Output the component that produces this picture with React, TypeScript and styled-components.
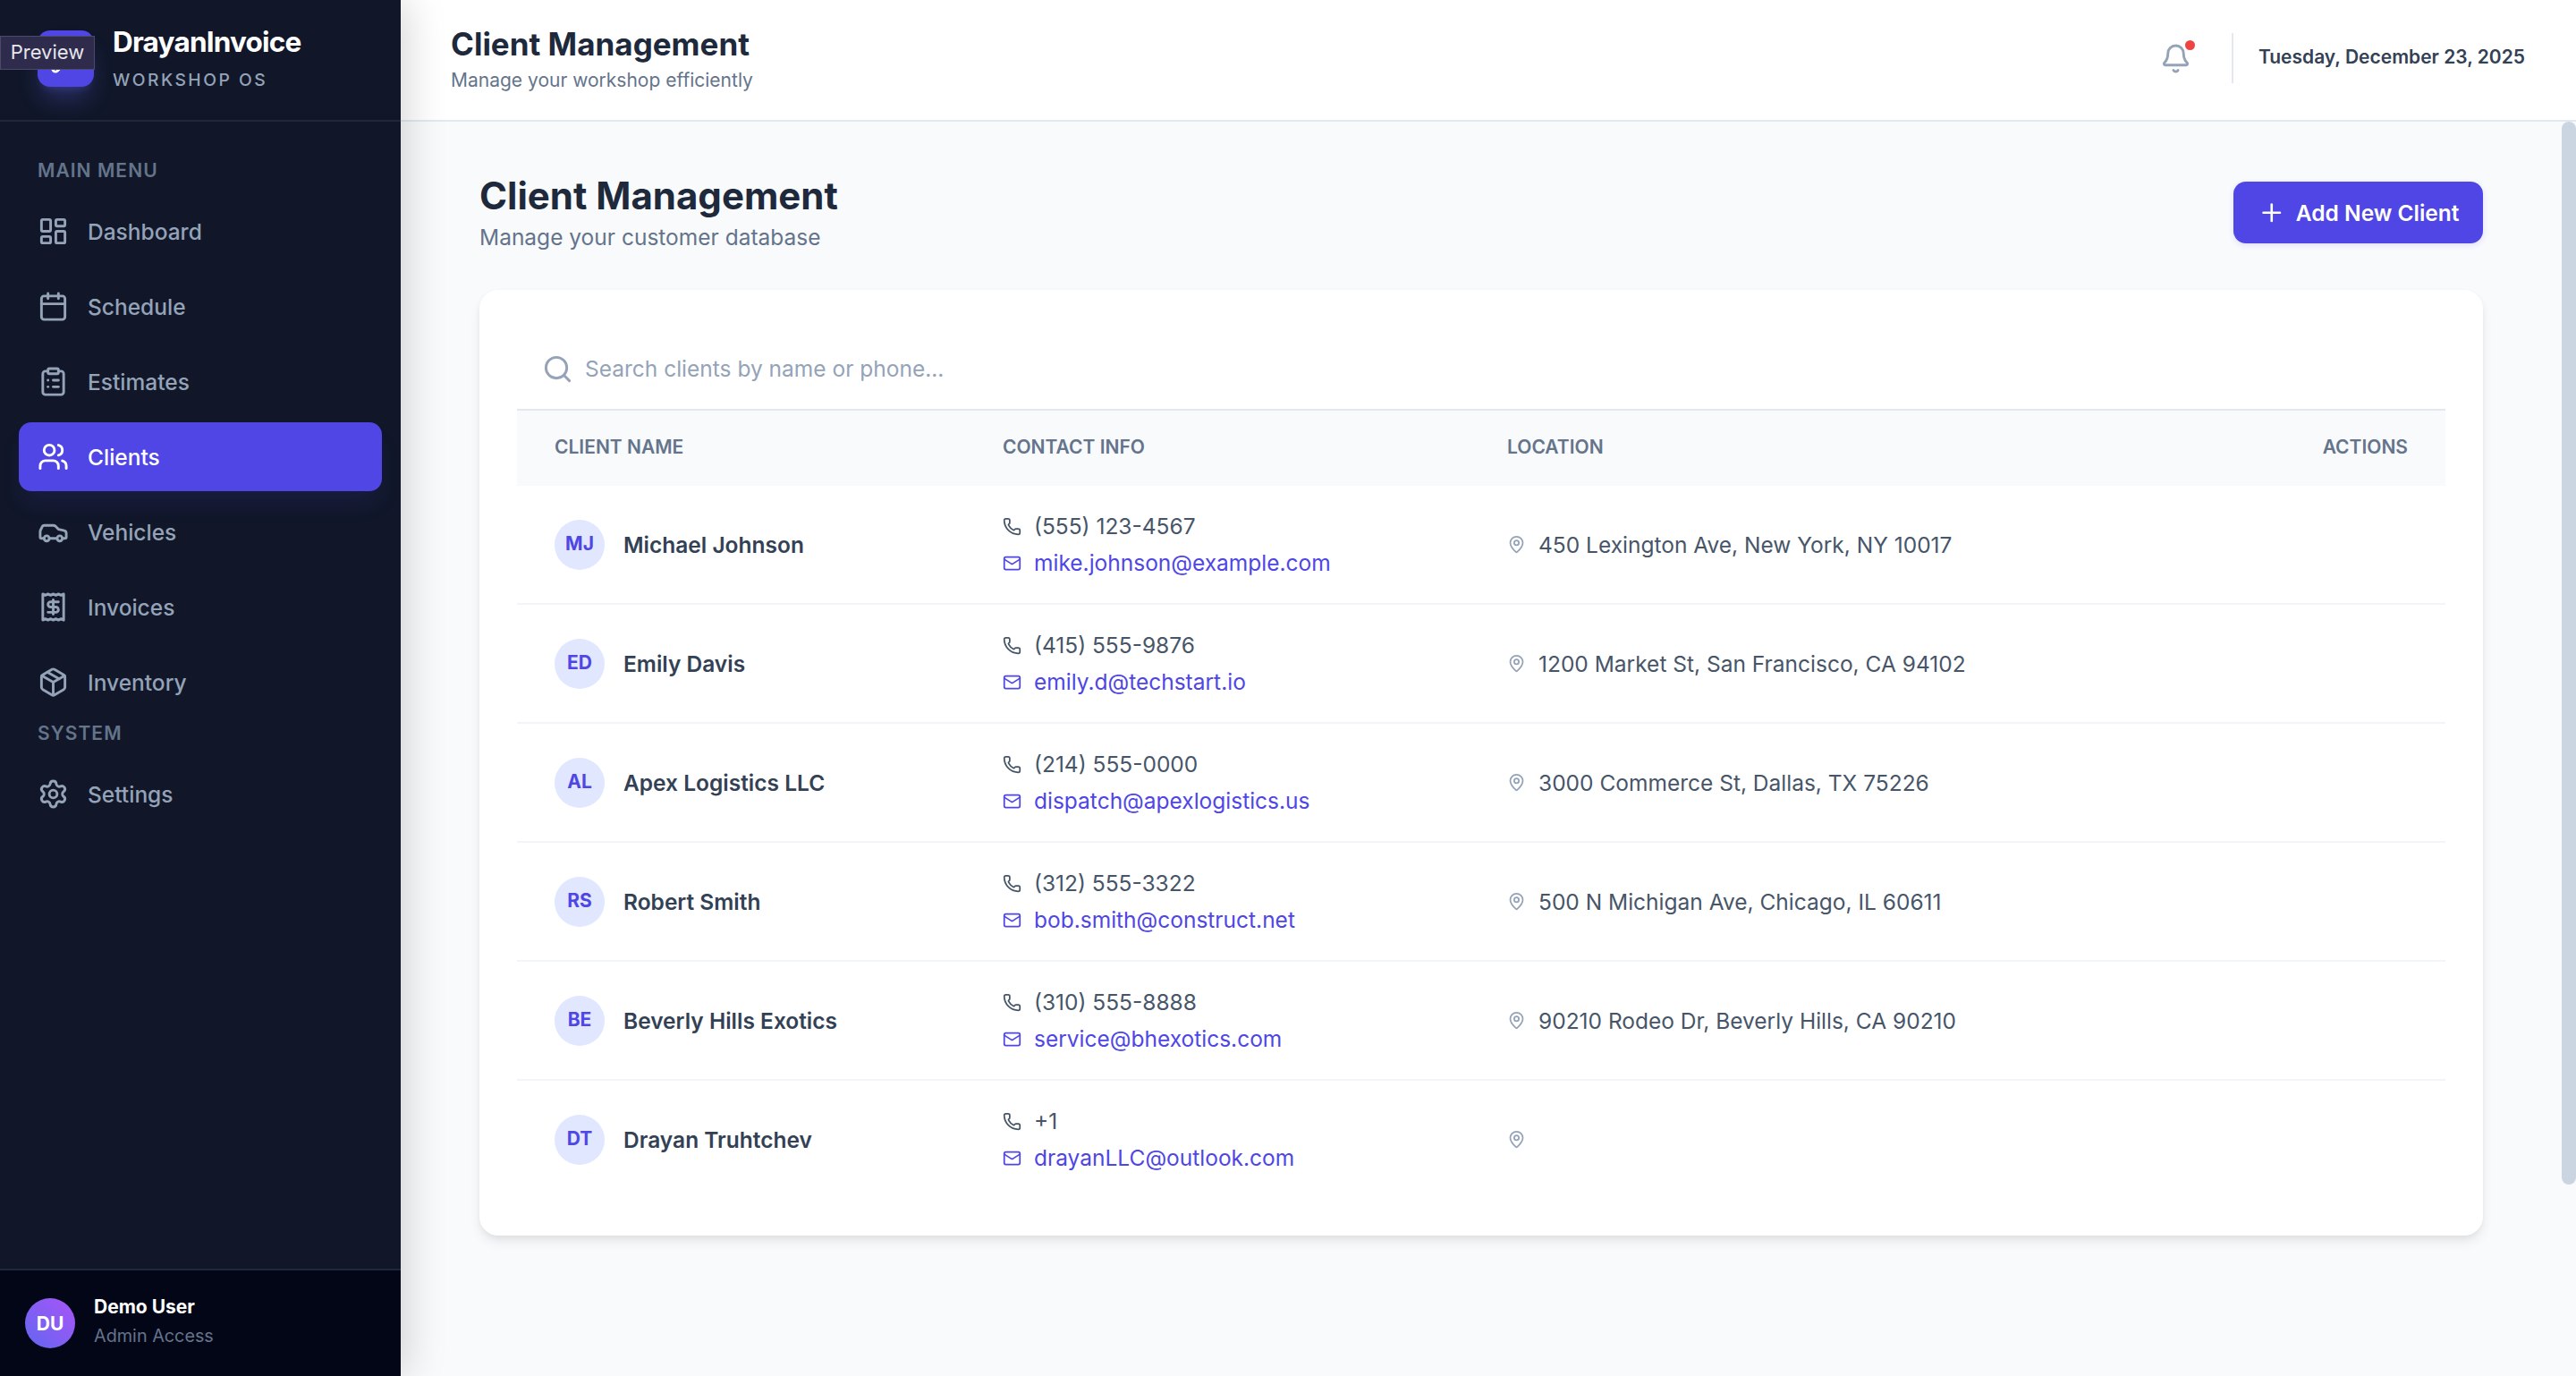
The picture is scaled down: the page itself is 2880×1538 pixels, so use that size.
import React from 'react';
import styled, { createGlobalStyle } from 'styled-components';
import {
  LayoutDashboard, Calendar, ClipboardList, Users, Car, Receipt, Package, Settings,
  Bell, Plus, Search, Phone, Mail, MapPin, Wrench,
} from 'lucide-react';

const Global = createGlobalStyle`
  html, body, #root { margin: 0; padding: 0; height: 100%; }
  body { font-family: Inter, "Liberation Sans", sans-serif; overflow: hidden; background: #f8fafc; -webkit-font-smoothing: antialiased; }
  * { box-sizing: border-box; }
`;

const Shell = styled.div`
  display: flex;
  height: 1538px;
  width: 2880px;
  overflow: hidden;
`;

const Sidebar = styled.aside`
  position: relative;
  z-index: 2;
  flex: 0 0 448px;
  display: flex;
  flex-direction: column;
  background: #111729;
  box-shadow: 4px 0 44px rgba(0, 0, 0, 0.18);
`;

const Brand = styled.div`
  position: relative;
  height: 136px;
  flex: none;
  display: flex;
  align-items: center;
  gap: 21px;
  padding: 0 42px 6px;
  border-bottom: 2px solid #1f2937;
`;

const LogoMark = styled.div`
  width: 63px;
  height: 63px;
  margin-top: 3px;
  border-radius: 14px;
  display: flex;
  align-items: center;
  justify-content: center;
  background: #4f46e5;
  color: #fff;
  box-shadow: 0 17.5px 26px -5px rgba(99, 102, 241, 0.3), 0 7px 10px -6px rgba(99, 102, 241, 0.3);
`;

const BrandText = styled.div`
  display: flex;
  flex-direction: column;
  gap: 11px;
`;

const BrandName = styled.div`
  font-size: 31.5px;
  line-height: 38px;
  font-weight: 700;
  letter-spacing: -0.79px;
  color: #fff;
`;

const BrandTag = styled.div`
  font-size: 19.25px;
  line-height: 24px;
  font-weight: 500;
  letter-spacing: 2.5px;
  color: #94a3b8;
`;

const PreviewBadge = styled.div`
  position: absolute;
  left: 0;
  top: 40px;
  width: 106px;
  height: 38px;
  padding-bottom: 2px;
  display: flex;
  align-items: center;
  justify-content: center;
  background: #2e2b4d;
  border: 1px solid #4b4a68;
  font-size: 22px;
  font-weight: 400;
  color: #e5e7eb;
`;

const Nav = styled.nav`
  flex: 1;
  display: flex;
  flex-direction: column;
  gap: 7px;
  padding: 43px 21px 0;
`;

const SectionLabel = styled.div`
  padding-left: 21px;
  font-size: 21px;
  line-height: 24px;
  font-weight: 600;
  letter-spacing: 1.05px;
  color: #64748b;
  margin-bottom: 10px;
`;

const NavItem = styled.div<{ $active?: boolean }>`
  flex: none;
  height: 77px;
  padding-left: 21px;
  display: flex;
  align-items: center;
  gap: 21px;
  border-radius: 14px;
  font-size: 24.5px;
  font-weight: 500;
  color: ${(p) => (p.$active ? '#fff' : '#94a3b8')};
  background: ${(p) => (p.$active ? '#4f46e5' : 'transparent')};
  box-shadow: ${(p) => (p.$active ? '0 17.5px 26px -5px rgba(79, 70, 229, 0.12)' : 'none')};
`;

const Footer = styled.div`
  height: 120px;
  flex: none;
  display: flex;
  align-items: center;
  gap: 21px;
  padding: 0 28px;
  background: #020617;
  border-top: 2px solid #1e293b;
`;

const UserAvatar = styled.div`
  width: 56px;
  height: 56px;
  border-radius: 50%;
  display: flex;
  align-items: center;
  justify-content: center;
  background: linear-gradient(45deg, #6366f1, #a855f7);
  color: #fff;
  font-size: 21px;
  font-weight: 700;
`;

const UserText = styled.div`
  display: flex;
  flex-direction: column;
  gap: 6px;
  padding-bottom: 5px;
`;

const UserName = styled.div`
  font-size: 21px;
  line-height: 26px;
  font-weight: 700;
  color: #fff;
`;

const UserRole = styled.div`
  font-size: 19.8px;
  line-height: 26px;
  color: #64748b;
`;

const Main = styled.div`
  flex: 1;
  min-width: 0;
  display: flex;
  flex-direction: column;
`;

const TopBar = styled.header`
  height: 136px;
  flex: none;
  display: flex;
  align-items: center;
  justify-content: space-between;
  padding: 0 57px 4px 56px;
  background: #fff;
  border-bottom: 2px solid #e2e8f0;
`;

const TopTitles = styled.div`
  display: flex;
  flex-direction: column;
  gap: 5px;
`;

const TopTitle = styled.div`
  font-size: 35px;
  line-height: 44px;
  font-weight: 700;
  color: #1e293b;
`;

const TopSub = styled.div`
  font-size: 21px;
  line-height: 28px;
  color: #64748b;
`;

const TopRight = styled.div`
  display: flex;
  align-items: center;
`;

const BellWrap = styled.div`
  position: relative;
  display: flex;
  color: #94a3b8;
  margin-right: 44.5px;
`;

const BellDot = styled.span`
  position: absolute;
  top: -3px;
  right: -4px;
  width: 11px;
  height: 11px;
  border-radius: 50%;
  background: #ef4444;
`;

const Divider = styled.div`
  width: 2px;
  height: 56px;
  background: #e2e8f0;
  margin-right: 28px;
`;

const DateText = styled.div`
  padding-bottom: 4px;
  font-size: 21px;
  font-weight: 600;
  color: #334155;
`;

const Scroll = styled.main`
  position: relative;
  flex: 1;
  min-height: 0;
  overflow: hidden;
  padding: 57px 104px 0 88px;
  background: #f8fafc;
`;

const ScrollThumb = styled.div`
  position: absolute;
  top: 0;
  right: 0;
  width: 16px;
  height: 1188px;
  border-radius: 8px;
  background: #cbd5e1;
`;

const PageHead = styled.div`
  display: flex;
  align-items: flex-start;
  justify-content: space-between;
  height: 95px;
  margin-bottom: 36px;
`;

const PageTitles = styled.div`
  display: flex;
  flex-direction: column;
  gap: 4px;
`;

const PageTitle = styled.h1`
  margin: 0;
  font-size: 42px;
  line-height: 52px;
  font-weight: 700;
  color: #1e293b;
`;

const PageSub = styled.div`
  font-size: 24.5px;
  line-height: 32px;
  color: #64748b;
`;

const AddButton = styled.button`
  height: 69px;
  margin-top: 10px;
  display: flex;
  align-items: center;
  gap: 11.75px;
  padding: 0 26.5px;
  border: none;
  border-radius: 14px;
  background: #4f46e5;
  color: #fff;
  font-family: inherit;
  font-size: 24.5px;
  font-weight: 600;
  box-shadow: 0 2px 6px rgba(79, 70, 229, 0.15);
`;

const Card = styled.section`
  height: 1057px;
  padding: 0 42px 41px;
  border-radius: 21px;
  background: #fff;
  box-shadow: 0 8px 14px -2px rgba(0, 0, 0, 0.09), 0 2px 6px rgba(0, 0, 0, 0.04);
`;

const SearchBar = styled.div`
  height: 135px;
  display: flex;
  align-items: center;
  gap: 13px;
  padding: 43px 28px 0;
  border-bottom: 2px solid #e2e8f0;
  color: #94a3b8;
  font-size: 24.5px;
`;

const Table = styled.div`
  display: grid;
  grid-template-columns: 501px 564px 1fr 200px;
`;

const HeadCell = styled.div<{ $right?: boolean }>`
  height: 84px;
  display: flex;
  align-items: center;
  justify-content: ${(p) => (p.$right ? 'flex-end' : 'flex-start')};
  padding: 0 42px 3px;
  background: #f8fafc;
  font-size: 21px;
  font-weight: 600;
  color: #64748b;
`;

const Cell = styled.div<{ $last?: boolean }>`
  height: 133px;
  display: flex;
  align-items: center;
  padding: 0 42px;
  padding-bottom: ${(p) => (p.$last ? '2px' : '0')};
  border-bottom: ${(p) => (p.$last ? 'none' : '2px solid #f1f5f9')};
`;

const ClientAvatar = styled.div`
  flex: none;
  width: 56px;
  height: 56px;
  border-radius: 50%;
  display: flex;
  align-items: center;
  justify-content: center;
  background: #e0e7ff;
  color: #4f46e5;
  font-size: 21px;
  font-weight: 700;
  margin-right: 21px;
  padding-bottom: 2px;
`;

const ClientName = styled.div`
  font-size: 24.5px;
  font-weight: 600;
  color: #334155;
`;

const ContactStack = styled.div`
  display: flex;
  flex-direction: column;
  gap: 9px;
`;

const ContactLine = styled.div<{ $link?: boolean }>`
  display: flex;
  align-items: center;
  gap: 14px;
  height: 32px;
  font-size: 24.5px;
  color: ${(p) => (p.$link ? '#4f46e5' : '#475569')};
`;

const LocationLine = styled.div`
  display: flex;
  align-items: center;
  gap: 14px;
  font-size: 24.5px;
  color: #475569;
`;

const PinIcon = styled(MapPin)`
  color: #94a3b8;
`;

const mainItems = [
  { label: 'Dashboard', Icon: LayoutDashboard },
  { label: 'Schedule', Icon: Calendar },
  { label: 'Estimates', Icon: ClipboardList },
  { label: 'Clients', Icon: Users, active: true },
  { label: 'Vehicles', Icon: Car },
  { label: 'Invoices', Icon: Receipt },
  { label: 'Inventory', Icon: Package },
];

const clients = [
  { i: 'MJ', name: 'Michael Johnson', phone: '(555) 123-4567', email: 'mike.johnson@example.com', loc: '450 Lexington Ave, New York, NY 10017' },
  { i: 'ED', name: 'Emily Davis', phone: '(415) 555-9876', email: 'emily.d@techstart.io', loc: '1200 Market St, San Francisco, CA 94102' },
  { i: 'AL', name: 'Apex Logistics LLC', phone: '(214) 555-0000', email: 'dispatch@apexlogistics.us', loc: '3000 Commerce St, Dallas, TX 75226' },
  { i: 'RS', name: 'Robert Smith', phone: '(312) 555-3322', email: 'bob.smith@construct.net', loc: '500 N Michigan Ave, Chicago, IL 60611' },
  { i: 'BE', name: 'Beverly Hills Exotics', phone: '(310) 555-8888', email: 'service@bhexotics.com', loc: '90210 Rodeo Dr, Beverly Hills, CA 90210' },
  { i: 'DT', name: 'Drayan Truhtchev', phone: '+1', email: 'drayanLLC@outlook.com', loc: '' },
];

export default function App() {
  return (
    <>
      <Global />
      <Shell>
        <Sidebar>
          <Brand>
            <LogoMark>
              <Wrench size={35} />
            </LogoMark>
            <BrandText>
              <BrandName>DrayanInvoice</BrandName>
              <BrandTag>WORKSHOP OS</BrandTag>
            </BrandText>
            <PreviewBadge>Preview</PreviewBadge>
          </Brand>
          <Nav>
            <SectionLabel>MAIN MENU</SectionLabel>
            {mainItems.map(({ label, Icon, active }) => (
              <NavItem key={label} $active={active}>
                <Icon size={35} />
                {label}
              </NavItem>
            ))}
            <SectionLabel>SYSTEM</SectionLabel>
            <NavItem>
              <Settings size={35} />
              Settings
            </NavItem>
          </Nav>
          <Footer>
            <UserAvatar>DU</UserAvatar>
            <UserText>
              <UserName>Demo User</UserName>
              <UserRole>Admin Access</UserRole>
            </UserText>
          </Footer>
        </Sidebar>
        <Main>
          <TopBar>
            <TopTitles>
              <TopTitle>Client Management</TopTitle>
              <TopSub>Manage your workshop efficiently</TopSub>
            </TopTitles>
            <TopRight>
              <BellWrap>
                <Bell size={35} />
                <BellDot />
              </BellWrap>
              <Divider />
              <DateText>Tuesday, December 23, 2025</DateText>
            </TopRight>
          </TopBar>
          <Scroll>
            <PageHead>
              <PageTitles>
                <PageTitle>Client Management</PageTitle>
                <PageSub>Manage your customer database</PageSub>
              </PageTitles>
              <AddButton>
                <Plus size={31.5} />
                Add New Client
              </AddButton>
            </PageHead>
            <Card>
              <SearchBar>
                <Search size={35} />
                <span>Search clients by name or phone...</span>
              </SearchBar>
              <Table>
                <HeadCell>CLIENT NAME</HeadCell>
                <HeadCell>CONTACT INFO</HeadCell>
                <HeadCell>LOCATION</HeadCell>
                <HeadCell $right>ACTIONS</HeadCell>
                {clients.map((c, idx) => {
                  const last = idx === clients.length - 1;
                  return (
                    <React.Fragment key={c.i}>
                      <Cell $last={last}>
                        <ClientAvatar>{c.i}</ClientAvatar>
                        <ClientName>{c.name}</ClientName>
                      </Cell>
                      <Cell $last={last}>
                        <ContactStack>
                          <ContactLine>
                            <Phone size={21} />
                            {c.phone}
                          </ContactLine>
                          <ContactLine $link>
                            <Mail size={21} />
                            {c.email}
                          </ContactLine>
                        </ContactStack>
                      </Cell>
                      <Cell $last={last}>
                        <LocationLine>
                          <PinIcon size={21} />
                          {c.loc}
                        </LocationLine>
                      </Cell>
                      <Cell $last={last} />
                    </React.Fragment>
                  );
                })}
              </Table>
            </Card>
            <ScrollThumb />
          </Scroll>
        </Main>
      </Shell>
    </>
  );
}
